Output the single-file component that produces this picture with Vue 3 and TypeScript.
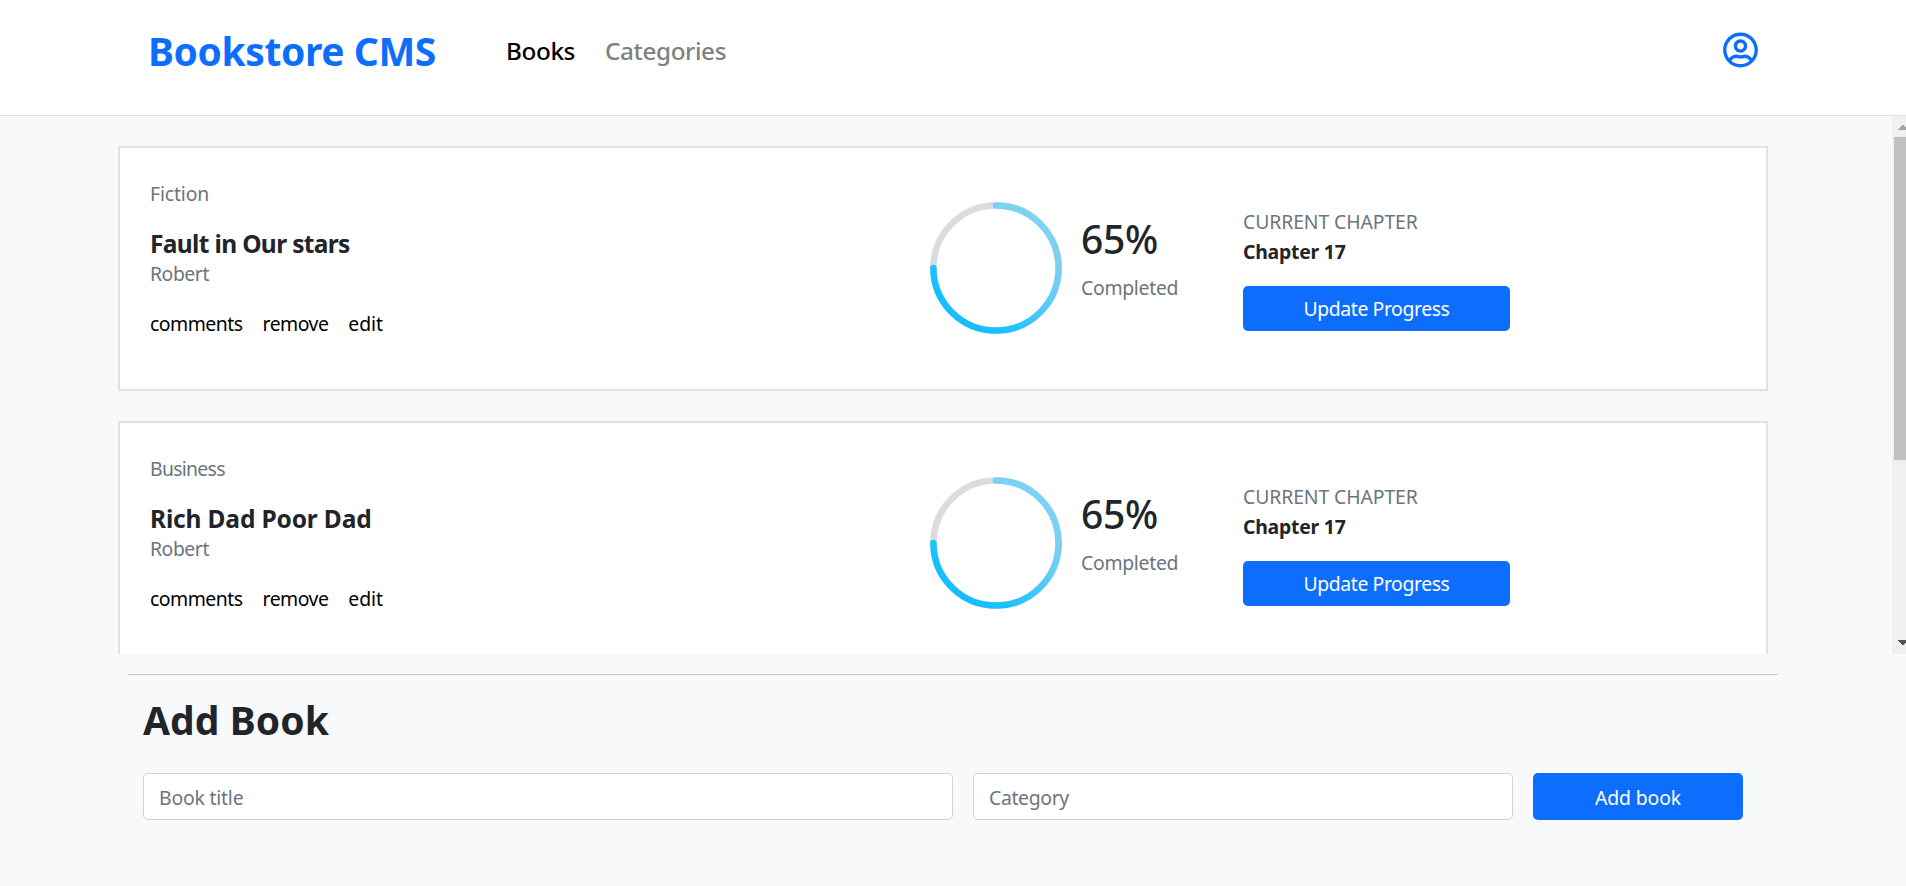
<script setup lang="ts">
import { ref } from 'vue'

interface Book {
  id: number
  category: string
  title: string
  author: string
  percent: number
  chapter: string
  tight: boolean
}

const books = ref<Book[]>([
  { id: 1, category: 'Fiction', title: 'Fault in Our stars', author: 'Robert', percent: 65, chapter: 'Chapter 17', tight: true },
  { id: 2, category: 'Business', title: 'Rich Dad Poor Dad', author: 'Robert', percent: 65, chapter: 'Chapter 17', tight: false },
])

const title = ref('')
const category = ref('')

function removeBook(id: number) {
  books.value = books.value.filter((b) => b.id !== id)
}

function addBook() {
  if (!title.value || !category.value) return
  books.value.push({
    id: Date.now(),
    category: category.value,
    title: title.value,
    author: 'Robert',
    percent: 65,
    chapter: 'Chapter 17',
    tight: false,
  })
  title.value = ''
  category.value = ''
}
</script>

<template>
  <div class="page">
    <header class="navbar">
      <a class="brand">Bookstore CMS</a>
      <nav class="links">
        <a class="link active">Books</a>
        <a class="link">Categories</a>
      </nav>
      <svg class="user" viewBox="0 0 496 512" aria-hidden="true">
        <path fill="currentColor" d="M248 104c-53 0-96 43-96 96s43 96 96 96 96-43 96-96-43-96-96-96zm0 144c-26.5 0-48-21.5-48-48s21.5-48 48-48 48 21.5 48 48-21.5 48-48 48zm0-240C111 8 0 119 0 256s111 248 248 248 248-111 248-248S385 8 248 8zm0 448c-49.7 0-95.1-18.3-130.1-48.4 14.9-23 40.4-38.6 69.6-39.5 20.8 6.4 40.6 9.6 60.5 9.6s39.7-3.1 60.5-9.6c29.2 1 54.7 16.5 69.6 39.5-35 30.1-80.4 48.4-130.1 48.4zm162.7-84.1c-24.4-31.4-62.1-51.9-105.1-51.9-10.2 0-26 9.6-57.6 9.6-31.5 0-47.4-9.6-57.6-9.6-42.9 0-80.6 20.5-105.1 51.9C61.9 339.2 48 299 48 256c0-110.3 89.7-200 200-200s200 89.7 200 200c0 43-13.9 83.2-37.3 115.9z" />
      </svg>
    </header>

    <div class="shelf">
      <main class="list">
        <article v-for="book in books" :key="book.id" class="card">
          <section class="info">
            <span class="muted" :class="book.tight ? 'snug' : 'condensed'">{{ book.category }}</span>
            <h2 class="title" :class="{ tight: book.tight }">{{ book.title }}</h2>
            <span class="muted author">{{ book.author }}</span>
            <div class="actions">
              <a class="action">comments</a>
              <a class="action" @click="removeBook(book.id)">remove</a>
              <a class="action edit">edit</a>
            </div>
          </section>
          <svg class="ring" viewBox="0 0 140 140" aria-hidden="true">
            <defs>
              <linearGradient :id="`arc-${book.id}`" x1="0.85" y1="0.1" x2="0.2" y2="0.85">
                <stop offset="0" stop-color="#80d3f2" />
                <stop offset="0.22" stop-color="#76d0f3" />
                <stop offset="0.4" stop-color="#66cef6" />
                <stop offset="0.8" stop-color="#25c2ff" />
                <stop offset="1" stop-color="#14beff" />
              </linearGradient>
            </defs>
            <circle cx="70" cy="70" r="62.6" fill="none" stroke="#dcdcdc" stroke-width="6.5" />
            <path d="M70 7.4A62.6 62.6 0 1 1 7.4 70" fill="none" :stroke="`url(#arc-${book.id})`" stroke-width="6.5" stroke-linecap="round" />
          </svg>
          <section class="stats">
            <span class="percent">{{ book.percent }}%</span>
            <span class="muted completed">Completed</span>
          </section>
          <section class="progress">
            <span class="muted heading">CURRENT CHAPTER</span>
            <span class="chapter">{{ book.chapter }}</span>
            <button class="button update">Update Progress</button>
          </section>
        </article>
      </main>
      <div class="scrollbar">
        <svg class="arrow" viewBox="0 0 14 21" shape-rendering="crispEdges"><path d="M5 14L10.5 8.5L16 14Z" fill="#a3a3a3" /></svg>
        <div class="thumb"></div>
        <svg class="arrow" viewBox="0 0 14 21" shape-rendering="crispEdges"><path d="M5 7L10.5 12.5L16 7Z" fill="#505050" /></svg>
      </div>
    </div>

    <hr class="rule" />

    <form class="add" @submit.prevent="addBook">
      <h1 class="add-title">Add Book</h1>
      <div class="fields">
        <input v-model="title" class="field name" placeholder="Book title" />
        <input v-model="category" class="field kind" placeholder="Category" />
        <button class="button submit">Add book</button>
      </div>
    </form>
  </div>
</template>

<style>
body {
  margin: 0;
  overflow: hidden;
  background: #f8f9fb;
}
</style>

<style scoped>
.page {
  height: 886px;
  background: #f8f9fb;
  color: #212529;
  font-family: "Noto Sans", "Open Sans", sans-serif;
  font-size: 19.4px;
  line-height: 30px;
}

.page *,
.page {
  box-sizing: border-box;
}

.navbar {
  display: flex;
  align-items: center;
  height: 116px;
  padding: 0 148px 14px;
  border-bottom: 1px solid #dee2e6;
  background: #fff;
}

.brand {
  width: 358px;
  color: #0d6efd;
  font-size: 39px;
  font-weight: 700;
  line-height: 60px;
  letter-spacing: -0.4px;
  white-space: nowrap;
}

.links {
  display: flex;
  gap: 30px;
  font-size: 24.3px;
  font-weight: 500;
  letter-spacing: -0.4px;
}

.link {
  color: #808080;
}

.link.active {
  color: #000;
}

.user {
  width: 35px;
  height: 36px;
  margin: 0 0 1px auto;
  color: #0d6efd;
}

.shelf {
  display: flex;
  justify-content: space-between;
  height: 538px;
  overflow: hidden;
}

.list {
  display: flex;
  flex-direction: column;
  gap: 30px;
  width: 1650px;
  margin-left: 118px;
  padding-top: 30px;
}

.card {
  display: flex;
  flex-shrink: 0;
  align-items: center;
  height: 245px;
  padding: 0 30px;
  border: 2px solid #dee2e6;
  background: #fff;
}

.info {
  display: flex;
  flex-direction: column;
  align-self: flex-start;
  width: 776px;
  padding-top: 31px;
}

.muted {
  color: #6c757d;
}

.snug {
  letter-spacing: -0.15px;
}

.condensed {
  letter-spacing: -0.7px;
}

.title {
  margin: 20px 0 0;
  font-size: 24.5px;
  font-weight: 700;
  line-height: 30px;
  letter-spacing: -0.15px;
}

.title.tight {
  letter-spacing: -0.65px;
}

.author {
  letter-spacing: -0.45px;
}

.actions {
  display: flex;
  gap: 20px;
  margin-top: 20px;
  letter-spacing: -0.5px;
}

.action {
  color: #000;
  cursor: pointer;
}

.edit {
  letter-spacing: -0.1px;
}

.ring {
  width: 140px;
  height: 140px;
  margin-bottom: 2px;
}

.stats {
  display: flex;
  flex-direction: column;
  gap: 10px;
  width: 162px;
  margin-left: 15px;
  padding-bottom: 19px;
}

.percent {
  font-size: 39px;
  font-weight: 500;
  line-height: 48px;
  letter-spacing: -0.3px;
}

.completed {
  letter-spacing: -0.3px;
}

.progress {
  display: flex;
  flex-direction: column;
  width: 267px;
  padding-top: 1px;
}

.heading {
  letter-spacing: -0.1px;
}

.chapter {
  font-weight: 700;
  letter-spacing: -0.22px;
}

.button {
  padding: 0;
  border: 0;
  border-radius: 5px;
  background: #0d6efd;
  color: #fff;
  font: inherit;
}

.update {
  height: 45px;
  margin-top: 19px;
  letter-spacing: -0.4px;
}

.scrollbar {
  display: flex;
  flex-direction: column;
  width: 14px;
  background: #f0f0f0;
}

.arrow {
  flex-shrink: 0;
  width: 14px;
  height: 21px;
}

.thumb {
  height: 323px;
  margin: 0 0 auto 2px;
  background: #c1c1c1;
}

.rule {
  width: 1650px;
  height: 1px;
  margin: 20px auto 0;
  border: 0;
  background: #c3c5c8;
}

.add {
  width: 1600px;
  margin: 21px 0 0 143px;
}

.add-title {
  margin: 0;
  font-size: 39px;
  font-weight: 700;
  line-height: 48px;
  letter-spacing: 0.1px;
}

.fields {
  display: flex;
  gap: 20px;
  margin-top: 29px;
}

.field {
  height: 47px;
  padding: 2px 15px 0;
  border: 1px solid #ced4da;
  border-radius: 5px;
  background: #fff;
  color: #212529;
  font: inherit;
  outline: none;
}

.field::placeholder {
  color: #6c757d;
  opacity: 1;
}

.name {
  width: 810px;
  letter-spacing: -0.2px;
}

.kind {
  width: 540px;
  letter-spacing: -0.35px;
}

.submit {
  width: 210px;
  height: 47px;
  padding-top: 2px;
  letter-spacing: -0.1px;
}
</style>
